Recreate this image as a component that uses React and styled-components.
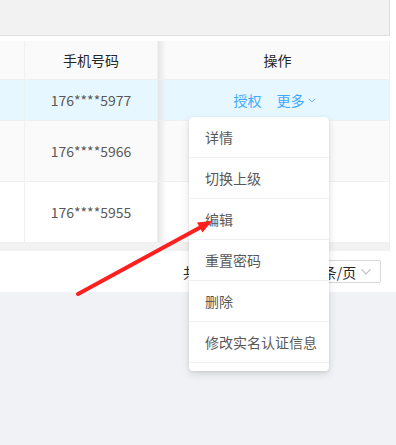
import React from "react"
import styled, { createGlobalStyle } from "styled-components"

const Global = createGlobalStyle`
  body {
    margin: 0;
    background: #f0f2f5;
    font-family: "Noto Sans CJK SC", "Noto Sans", sans-serif;
    font-size: 14px;
  }
`

const Page = styled.div`
  position: relative;
  width: 396px;
  height: 445px;
  overflow: hidden;
`

const Card = styled.div`
  background: #fff;
  padding-right: 6px;
  height: 292px;
  display: flex;
  flex-direction: column;
`

const FilterBox = styled.div`
  height: 35px;
  background: #f2f2f2;
  border-bottom: 1px solid #dddddd;
  border-right: 1px solid #dddddd;
`

const Table = styled.div`
  margin-top: 5px;
  border-right: 1px solid #f0f0f0;
`

const Row = styled.div`
  display: grid;
  grid-template-columns: 25px 133px 1fr;
  height: ${p => p.h}px;
  background: ${p => p.bg || "#fff"};
  border-bottom: 1px solid #f0f0f0;
`

const Cell = styled.div`
  display: flex;
  align-items: center;
  justify-content: center;
  border-right: 1px solid #f0f0f0;
  color: ${p => (p.head ? "#262626" : "#595959")};
`

const FixedCell = styled.div`
  position: relative;
  display: flex;
  align-items: center;
  justify-content: center;
  gap: 15px;
  padding-left: ${p => (p.head ? 8 : 2)}px;
  color: #262626;

  &::before {
    content: "";
    position: absolute;
    left: 0;
    top: 0;
    bottom: 0;
    width: 8px;
    background: linear-gradient(to right, #e6e6e6, rgba(0, 0, 0, 0));
  }
`

const Link = styled.span`
  color: #40a9ff;
  display: inline-flex;
  align-items: center;
  gap: 3px;
`

const Scrollbar = styled.div`
  height: 8px;
  background: #f2f2f2;
`

const Pager = styled.div`
  flex: 1;
  display: flex;
  align-items: center;
  justify-content: flex-end;
  padding-right: 9px;
  color: #262626;
`

const Total = styled.span`
  margin-right: 66px;
`

const SizeSelect = styled.div`
  width: 90px;
  height: 23px;
  box-sizing: border-box;
  border: 1px solid #d9d9d9;
  border-radius: 2px;
  display: flex;
  align-items: center;
  justify-content: space-between;
  padding: 0 8px 0 12px;
`

const Menu = styled.div`
  position: absolute;
  left: 189px;
  top: 117px;
  width: 140px;
  padding-bottom: 8px;
  background: #fff;
  border-radius: 4px;
  box-shadow: 0 3px 8px rgba(0, 0, 0, 0.12), 0 1px 3px rgba(0, 0, 0, 0.08);
`

const MenuItem = styled.div`
  height: 40px;
  display: flex;
  align-items: center;
  padding-left: 16px;
  color: #595959;
  border-bottom: 1px solid #f0f0f0;
  white-space: nowrap;
`

const Arrow = styled.svg`
  position: absolute;
  left: 0;
  top: 0;
  pointer-events: none;
`

const Chevron = ({ size = 8, color = "#40a9ff" }) => (
  <svg width={size} height={size / 2 + 1} viewBox="0 0 10 6">
    <path d="M1 1l4 4 4-4" fill="none" stroke={color} strokeWidth="1" />
  </svg>
)

const rows = [
  { phone: "176****5977", h: 40, bg: "#e6f7ff", actions: true },
  { phone: "176****5966", h: 60, bg: "#fafafa" },
  { phone: "176****5955", h: 60, bg: "#fff" },
]

const menuItems = ["详情", "切换上级", "编辑", "重置密码", "删除", "修改实名认证信息"]

export default function App() {
  return (
    <Page>
      <Global />
      <Card>
        <FilterBox />
        <Table>
          <Row h={38} bg="#fafafa">
            <Cell head />
            <Cell head>手机号码</Cell>
            <FixedCell head>操作</FixedCell>
          </Row>
          {rows.map(r => (
            <Row key={r.phone} h={r.h} bg={r.bg}>
              <Cell />
              <Cell>{r.phone}</Cell>
              <FixedCell>
                {r.actions && (
                  <>
                    <Link>授权</Link>
                    <Link>更多<Chevron /></Link>
                  </>
                )}
              </FixedCell>
            </Row>
          ))}
          <Scrollbar />
        </Table>
        <Pager>
          <Total>共 3 条</Total>
          <SizeSelect>
            <span>10 条/页</span>
            <Chevron size={12} color="#bfbfbf" />
          </SizeSelect>
        </Pager>
      </Card>

      <Menu>
        {menuItems.map(m => (
          <MenuItem key={m}>{m}</MenuItem>
        ))}
      </Menu>

      <Arrow width="396" height="445">
        <line x1="78" y1="294" x2="201" y2="227" stroke="#ff1f1f" strokeWidth="4" strokeLinecap="round" />
        <polygon points="212,221 202.5,232.5 197,222.5" fill="#ff1f1f" />
      </Arrow>
    </Page>
  )
}
